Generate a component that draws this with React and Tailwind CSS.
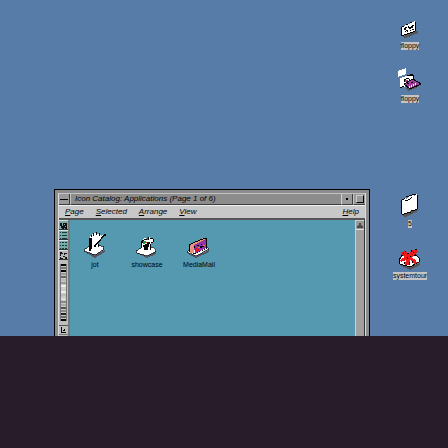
const menus = ['Page', 'Selected', 'Arrange', 'View'];

function Svg({ w, h, children, className = '' }) {
  return (
    <svg
      aria-hidden="true"
      width={w}
      height={h}
      viewBox={`0 0 ${w} ${h}`}
      shapeRendering="crispEdges"
      className={`block shrink-0 ${className}`}
    >
      {children}
    </svg>
  );
}

function JotIcon() {
  return (
    <Svg w={24} h={26}>
      <path d="M2 20L12 26L22 20V18L12 23L2 18Z" fill="#555566" />
      <path d="M1 18L8 13L18 14L21 15L20 18L12 23L1 19Z" fill="#fff" stroke="#000" strokeWidth="0.7" />
      <path d="M7 5L9 2L12 1L16 2L18 4V8L15 11V17L12 19L8 18Z" fill="#fff" />
      <path d="M6 6H9V17H8V19H6ZM8 3H9V5H8ZM10 1H11V4H10ZM13 0H14V3H13ZM16 1H17V4H16ZM15 12H16V15H15Z" fill="#000" />
      <path d="M12 14L21 3" stroke="#000" strokeWidth="1.6" />
      <path d="M14 10L20 3" stroke="#fff" strokeWidth="1" />
      <path d="M21 2H23V4H21ZM11 14H13V15H11Z" fill="#000" />
    </Svg>
  );
}

function ShowcaseIcon() {
  return (
    <Svg w={24} h={22}>
      <path d="M2 17L12 22L21 18V16L12 20L2 15Z" fill="#555566" />
      <path d="M1 15L7 11H18L21 14L20 16L12 20L2 17Z" fill="#fff" stroke="#000" strokeWidth="0.7" />
      <path d="M6 5L9 2L12 3L14 1L18 3V6L16 7L15 15H8L6 10Z" fill="#fff" />
      <path d="M6 5H7V4H9V3H12V4H9V5H8V7H7V12H6ZM12 1H14V4H12ZM10 8H14V11H13V14H9V11H8V9H10ZM12 6H15V8H12ZM15 8H16V14H15ZM15 2H18V3H15ZM18 3H19V6H18ZM16 6H18V7H16Z" fill="#000" />
      <path d="M8 5H11V7H10V8H8Z" fill="#139a3a" />
      <path d="M12 1H13V4H12ZM11 6H12V7H11Z" fill="#e01515" />
    </Svg>
  );
}

function MediaMailIcon() {
  return (
    <Svg w={26} h={22}>
      <path d="M2 18L10 22L23 16V14L10 20L2 16Z" fill="#555566" />
      <path d="M1 16L5 13L20 11L23 13L10 20Z" fill="#fff" stroke="#000" strokeWidth="0.6" />
      <path d="M4 8L17 2H20V4L8 9V18L3 16Z" fill="#e8937c" />
      <path d="M8 9L20 3V12L9 18Z" fill="#9631ad" />
      <path d="M3 8H5V7H7V6H9V5H12V4H14V3H17V2H21V12H20V3H17V4H14V5H12V6H9V7H7V8H5V9H4V16H3ZM8 10H9V12H8ZM11 9H13V10H11ZM15 8H16V9H15ZM14 10H18V11H16V12H14ZM9 17H11V16H13V15H16V14H18V13H20V12H21V13H19V14H17V15H14V16H12V17H10V18H7V17Z" fill="#000" />
      <path d="M9 12H11V13H13V15H11V16H9ZM13 10H14V11H13Z" fill="#e01515" />
      <path d="M12 11H14V12H12ZM17 9H19V10H17Z" fill="#c9962a" />
    </Svg>
  );
}

function FloppyIcon() {
  return (
    <Svg w={20} h={20}>
      <path d="M2 17L6 18L18 13V11L14 10Z" fill="#555" />
      <path d="M2 7L15 1V11L2 16Z" fill="#fff" />
      <path d="M2 15H4V16H2ZM15 2H16V11H15ZM13 11H15V12H13ZM10 12H13V13H10ZM7 13H10V14H7ZM4 14H7V15H4ZM1 7H2V16H1ZM2 6H4V7H2ZM6 4H8V5H6ZM10 2H12V3H10Z" fill="#000" />
      <path d="M4 8H5V7H7V8H6V10H4ZM8 6H9V7H11V6H12V5H14V6H13V8H11V9H9V8H8ZM5 11H6V10H8V12H7V11H6V12H5ZM10 10H11V11H10ZM12 9H14V10H12Z" fill="#000" />
    </Svg>
  );
}

function DiskIcon() {
  return (
    <Svg w={26} h={26}>
      <path d="M2 23L8 21L12 24L21 20L19 18Z" fill="#555" />
      <path d="M1 4L9 1V7L1 10Z" fill="#fff" />
      <path d="M3 11L16 7V17L3 21Z" fill="#fff" />
      <path d="M10 8H13V7H16V8H17V14H16V9H13V9H10ZM3 20H5V19H7V20H5V21H3ZM7 12H9V11H12V12H9V13H8V15H7ZM12 12H13V15H11V14H12Z" fill="#000" />
      <path d="M7 17L16 12L24 17L13 22Z" fill="#a13a9c" stroke="#000" strokeWidth="1" />
      <path d="M8 13H11V14H10V15H8Z" fill="#a13a9c" />
      <path d="M10 16H12V17H10ZM14 15H16V16H14Z" fill="#000" />
      <path d="M12 19H13V21H12ZM14 18H15V20H14ZM16 17H17V19H16ZM18 16H19V18H18Z" fill="#fff" />
    </Svg>
  );
}

function FolderIcon() {
  return (
    <Svg w={20} h={25}>
      <path d="M2 23L6 24L18 18V16L14 15Z" fill="#555" />
      <path d="M2 7L5 5L6 6L9 3L13 2L14 3L16 1L17 2V16L2 21Z" fill="#fff" />
      <path d="M1 7H2V21H1ZM2 6H4V7H2ZM4 5H5V6H4ZM6 3H9V4H6ZM9 2H12V3H9ZM12 1H16V2H12ZM17 2H18V16H17ZM5 7H8V6H10V5H11V4H12V5H11V6H10V7H8V8H5ZM15 16H17V17H15ZM11 17H15V18H11ZM7 19H11V20H7ZM2 21H4V20H7V21H4V22H2Z" fill="#000" />
    </Svg>
  );
}

function TourIcon() {
  return (
    <Svg w={24} h={22}>
      <path d="M2 17L12 22L22 17V15L12 19Z" fill="#555" />
      <path d="M1 12L4 8L17 6L21 10V14L12 19L2 16Z" fill="#fff" stroke="#000" strokeWidth="1" />
      <path d="M3 4L7 3L11 7L14 2L19 1L20 4L15 8L14 10L18 12L19 15L16 16L12 12L11 17H7L8 12L3 14L2 12L7 9L3 7Z" fill="#f01a1a" />
      <path d="M7 3H8V4H7ZM9 5H11V6H9ZM13 2H14V4H13ZM17 1H19V2H17ZM3 7H5V8H3ZM16 7H18V8H16ZM9 9H10V11H9ZM12 8H13V9H12ZM15 4H16V5H15ZM5 5H6V6H5ZM14 13H15V15H14ZM11 14H12V17H11ZM6 14H7V16H6Z" fill="#000" />
    </Svg>
  );
}

const apps = [
  { name: 'jot', Icon: JotIcon, pos: 'left-[-1px]' },
  { name: 'showcase', Icon: ShowcaseIcon, pos: 'left-[51px]' },
  { name: 'MediaMail', Icon: MediaMailIcon, pos: 'left-[103px]' },
];

const desktopIcons = [
  { id: 'a', name: 'floppy', Icon: FloppyIcon, pos: 'top-[20px]' },
  { id: 'b', name: 'floppy', Icon: DiskIcon, pos: 'top-[67px]' },
  { id: 'c', name: '5', Icon: FolderIcon, pos: 'top-[193px]' },
  { id: 'd', name: 'systemtour', Icon: TourIcon, pos: 'top-[248px]' },
];

const tools = [
  {
    label: 'View as icons',
    bg: 'bg-[#78aaaa]',
    art: <path d="M1 2H3V5H4V2H8V8H6V7H5V8H3V7H2V5H1ZM5 3V4H6V3ZM6 5V6H7V5Z" fill="#111" />,
  },
  {
    label: 'View as list',
    bg: 'bg-[#78aaaa]',
    art: <path d="M1 1H2V2H1ZM3 1H8V2H3ZM1 4H2V5H1ZM3 4H8V5H3ZM1 7H2V8H1ZM3 7H8V8H3Z" fill="#12393b" />,
  },
  {
    label: 'View as columns',
    bg: 'bg-[#78aaaa]',
    art: <path d="M1 1H2V2H1ZM3 1H5V2H3ZM6 1H8V2H6ZM1 4H2V5H1ZM3 4H5V5H3ZM6 4H8V5H6ZM1 7H2V8H1ZM3 7H5V8H3ZM6 7H8V8H6Z" fill="#12393b" />,
  },
  {
    label: 'Arrange icons',
    bg: 'bg-[#b8b8b8]',
    art: <path d="M1 1H3V2H4V3H2V5H1ZM5 2H8V3H6V4H5ZM1 6H2V7H4V8H1ZM4 5H6V6H4ZM6 6H8V8H6Z" fill="#111" />,
  },
];

const ridges = [
  'bg-black', 'bg-[#777]', 'bg-black', 'bg-[#999]', 'bg-[#666]', 'bg-[#bbb]', 'bg-[#999]',
  'bg-[#eee]', 'bg-[#ccc]', 'bg-[#eee]', 'bg-[#bbb]', 'bg-[#ddd]', 'bg-[#888]', 'bg-[#aaa]',
  'bg-[#555]', 'bg-[#888]', 'bg-[#222]', 'bg-[#666]', 'bg-black',
];

function TitleBar() {
  return (
    <header className="flex h-3 items-stretch border-t border-[#c4c4c4] bg-[#8c8c8c]">
      <button aria-label="Window menu" className="flex w-[11px] items-center justify-center border-r border-b border-[#3c3c3c] bg-[#999]">
        <span className="h-px w-2 bg-black" />
      </button>
      <h1 className="flex-1 overflow-hidden border-b border-l border-b-[#3c3c3c] border-l-[#c4c4c4] pl-1 text-[8px] leading-[10px] font-normal whitespace-nowrap italic">
        Icon Catalog: Applications (Page 1 of 6)
      </h1>
      <button aria-label="Minimize" className="flex w-3 items-center justify-center border-r border-b border-l border-r-[#3c3c3c] border-b-[#3c3c3c] border-l-[#d0d0d0] bg-[#999]">
        <span className="size-[2px] bg-black" />
      </button>
      <button aria-label="Maximize" className="flex w-3 items-center justify-center border-b border-l border-b-[#3c3c3c] border-l-[#c4c4c4] bg-[#999]">
        <span className="size-2 border border-t-[#ccc] border-r-black border-b-black border-l-[#ccc]" />
      </button>
    </header>
  );
}

function MenuBar() {
  return (
    <nav className="flex h-[15px] items-center justify-between border-t border-b-2 border-t-[#f0f0f0] border-b-[#555] bg-[#c8c8c8] px-[6px] text-[8px] leading-3 font-medium italic">
      <div className="flex gap-3">
        {menus.map((m) => (
          <button key={m} className="first-letter:underline">{m}</button>
        ))}
      </div>
      <button className="first-letter:underline">Help</button>
    </nav>
  );
}

function ToolPalette() {
  return (
    <aside className="flex w-[11px] shrink-0 flex-col border-r-2 border-[#777] bg-[#bdbdbd]">
      {tools.map((t) => (
        <button key={t.label} aria-label={t.label} className={`h-[10px] border-t border-b border-t-[#ddd] border-b-[#333] ${t.bg}`}>
          <Svg w={9} h={8}>{t.art}</Svg>
        </button>
      ))}
      <div className="mt-1 flex h-[57px] justify-center">
        <div className="flex w-[7px] flex-col justify-between border-x border-[#777] bg-[#c8c8c8]">
          {ridges.map((c, i) => (
            <span key={i} className={`h-[2px] ${c}`} />
          ))}
        </div>
      </div>
      <button aria-label="Zoom icons" className="mt-1 h-[10px] border-t border-b border-t-[#555] border-b-[#777]">
        <Svg w={9} h={8}>
          <path d="M2 1H3V6H7V7H2ZM5 3H6V5H4V4H5Z" fill="#000" />
        </Svg>
      </button>
    </aside>
  );
}

function CatalogWindow() {
  return (
    <section className="absolute top-[189px] right-[78px] bottom-0 left-[54px] flex flex-col border-x border-t border-x-black border-t-black bg-[#8c8c8c] px-[3px] pt-[3px]">
      <div className="flex min-h-0 flex-1 flex-col border-x border-x-[#dcdcdc]">
        <TitleBar />
        <MenuBar />
        <div className="flex min-h-0 flex-1">
          <ToolPalette />
          <main className="relative flex-1 bg-[#5499b0]">
            {apps.map(({ name, Icon, pos }) => (
              <button key={name} className={`absolute top-3 flex w-[52px] flex-col items-center ${pos}`}>
                <span className="flex h-[26px] items-end"><Icon /></span>
                <span className="mt-[3px] text-[7px] leading-2">{name}</span>
              </button>
            ))}
          </main>
          <div className="w-[10px] shrink-0 border-x border-l-[#d0d0d0] border-r-[#333] bg-[#a0a0a0]">
            <button aria-label="Scroll up" className="flex h-[10px] w-full items-center justify-center border-t border-b border-t-[#ccc] border-b-[#e0e0e0] bg-[#999]">
              <Svg w={6} h={6}>
                <path d="M2 1H4V3H5V4H6V6H0V4H1V3H2Z" fill="#4c4c4c" />
              </Svg>
            </button>
          </div>
        </div>
      </div>
    </section>
  );
}

export default function App() {
  return (
    <div className="grid h-screen grid-rows-[3fr_1fr] overflow-hidden bg-[#281c2b] font-['Liberation_Sans',Arial,sans-serif] text-black">
      <div className="relative overflow-hidden bg-[#587ca8]">
        <CatalogWindow />
        {desktopIcons.map(({ id, name, Icon, pos }) => (
          <button key={id} className={`absolute right-[13px] flex w-[50px] flex-col items-center ${pos}`}>
            <Icon />
            <span className="mt-[2px] bg-[#c4c4c4] text-[7px] leading-2">{name}</span>
          </button>
        ))}
      </div>
      <footer className="bg-[#281c2b]" />
    </div>
  );
}
